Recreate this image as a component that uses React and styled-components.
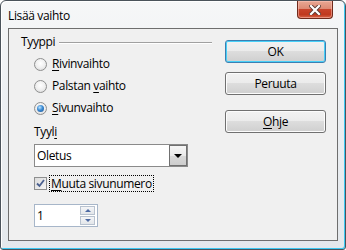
import React from "react";
import styled, { createGlobalStyle } from "styled-components";

const GlobalStyle = createGlobalStyle`
  html, body {
    margin: 0;
    padding: 0;
    background: #ffffff;
  }
  body {
    font-family: "Open Sans", "Liberation Sans", sans-serif;
    font-size: 12px;
    letter-spacing: -0.35px;
    color: #000;
  }
`;

const Window = styled.div`
  width: 346px;
  height: 250px;
  box-sizing: border-box;
  display: flex;
  flex-direction: column;
  padding: 0 7px 8px 7px;
  border: 1px solid #4b535b;
  border-radius: 6px 6px 3px 3px;
  background: linear-gradient(180deg, #f6f7f8 0%, #eceff2 40%, #e4e8ec 100%);
  box-shadow: inset -1px -1px 0 #3cc8f2, inset 1px 1px 0 #ffffff;
`;

const TitleBar = styled.div`
  height: 27px;
  display: flex;
  align-items: flex-start;
  margin: 0 -7px 0 0;
`;

const Title = styled.div`
  padding-top: 7px;
  font-size: 12px;
  line-height: 16px;
`;

const CloseButton = styled.div`
  margin-left: auto;
  margin-right: 12px;
  width: 36px;
  height: 18px;
  box-sizing: border-box;
  border: 1px solid #6f2a1c;
  border-top: none;
  border-radius: 0 0 4px 4px;
  background: linear-gradient(
    180deg,
    #e9a894 0%,
    #dd8a74 45%,
    #c8432b 50%,
    #c0391f 80%,
    #d7664a 100%
  );
  box-shadow: inset 0 0 0 1px rgba(255, 200, 190, 0.5);
  display: flex;
  align-items: center;
  justify-content: center;
`;

const Client = styled.div`
  flex: 1;
  display: flex;
  border: 1px solid #6e6e6e;
  background: #f0f0f0;
`;

const LeftColumn = styled.div`
  width: 191px;
  padding: 5px 0 0 12px;
  display: flex;
  flex-direction: column;
`;

const GroupHeader = styled.div`
  display: flex;
  align-items: center;
  gap: 4px;
  height: 16px;
  line-height: 16px;
  &::after {
    content: "";
    flex: 1;
    height: 1px;
    background: #a0a0a0;
    box-shadow: 0 1px 0 #ffffff;
  }
`;

const Indented = styled.div`
  padding-left: 13px;
  display: flex;
  flex-direction: column;
`;

const RadioList = styled.div`
  margin-top: 3px;
  display: flex;
  flex-direction: column;
`;

const RadioRow = styled.div`
  height: 22px;
  display: flex;
  align-items: center;
  gap: 5px;
`;

const RadioCircle = styled.span`
  width: 13px;
  height: 13px;
  box-sizing: border-box;
  border-radius: 50%;
  border: 1px solid #8e8f8f;
  background: radial-gradient(circle at 50% 40%, #ffffff 0%, #f0f0f0 50%, #d4d4d4 100%);
  display: flex;
  align-items: center;
  justify-content: center;
  &::after {
    content: "";
    display: ${(p) => (p.$checked ? "block" : "none")};
    width: 7px;
    height: 7px;
    border-radius: 50%;
    background: radial-gradient(circle at 40% 35%, #bfe6ff 0%, #3b8bd4 45%, #1b4f8c 100%);
  }
`;

const Label = styled.span`
  line-height: 16px;
`;

const Key = styled.span`
  text-decoration: underline;
  text-underline-offset: 2px;
`;

const FieldLabel = styled.div`
  margin-top: 5px;
  height: 16px;
  line-height: 16px;
`;

const Select = styled.div`
  margin-top: 4px;
  width: 154px;
  height: 23px;
  box-sizing: border-box;
  border: 1px solid #8a8a8a;
  background: #ffffff;
  display: flex;
  align-items: stretch;
  padding: 0 0 0 2px;
`;

const SelectValue = styled.div`
  flex: 1;
  display: flex;
  align-items: center;
`;

const DropButton = styled.div`
  width: 18px;
  box-sizing: border-box;
  border: 1px solid #707070;
  background: linear-gradient(180deg, #f6f6f6 0%, #e9e9e9 50%, #d9d9d9 51%, #cdcdcd 100%);
  display: flex;
  align-items: center;
  justify-content: center;
  &::after {
    content: "";
    border-left: 4px solid transparent;
    border-right: 4px solid transparent;
    border-top: 4px solid #000;
  }
`;

const CheckRow = styled.div`
  margin-top: 8px;
  height: 17px;
  display: flex;
  align-items: center;
  gap: 3px;
`;

const CheckBox = styled.span`
  width: 13px;
  height: 13px;
  box-sizing: border-box;
  border: 1px solid #8e8f8f;
  background: linear-gradient(135deg, #dcdcdc 0%, #f4f4f4 100%);
  display: flex;
  align-items: center;
  justify-content: center;
`;

const FocusLabel = styled.span`
  outline: 1px dotted #000;
  padding: 0 1px;
  line-height: 15px;
`;

const SpinBox = styled.div`
  margin-top: 12px;
  width: 64px;
  height: 23px;
  box-sizing: border-box;
  border: 1px solid #a7b6c9;
  background: #ffffff;
  display: flex;
  align-items: stretch;
  padding: 1px 2px 1px 2px;
`;

const SpinValue = styled.div`
  flex: 1;
  display: flex;
  align-items: center;
`;

const SpinButtons = styled.div`
  width: 15px;
  display: flex;
  flex-direction: column;
  gap: 1px;
`;

const SpinButton = styled.div`
  flex: 1;
  box-sizing: border-box;
  border: 1px solid #b8c2cf;
  background: linear-gradient(180deg, #f4f5f7 0%, #e3e6ea 100%);
  display: flex;
  align-items: center;
  justify-content: center;
  &::after {
    content: "";
    border-left: 3px solid transparent;
    border-right: 3px solid transparent;
    ${(p) =>
      p.$up
        ? "border-bottom: 3px solid #4d6aa3;"
        : "border-top: 3px solid #4d6aa3;"}
  }
`;

const RightColumn = styled.div`
  margin-left: 13px;
  padding-top: 11px;
  display: flex;
  flex-direction: column;
`;

const Button = styled.div`
  width: 101px;
  height: 23px;
  box-sizing: border-box;
  margin-top: ${(p) => p.$gap || 0}px;
  border: 1px solid ${(p) => (p.$default ? "#3c7fb1" : "#707070")};
  border-radius: 3px;
  background: linear-gradient(180deg, #f2f2f2 0%, #ebebeb 49%, #dddddd 50%, #cfcfcf 100%);
  box-shadow: ${(p) =>
    p.$default ? "inset 0 0 0 1px #48d0f8" : "inset 0 0 0 1px #fcfcfc"};
  display: flex;
  align-items: center;
  justify-content: center;
  line-height: 16px;
`;

function App() {
  return (
    <>
      <GlobalStyle />
      <Window>
        <TitleBar>
          <Title>Lisää vaihto</Title>
          <CloseButton>
            <svg width="12" height="10" viewBox="0 0 12 10">
              <path
                d="M2 1 L10 9 M10 1 L2 9"
                stroke="#5b3a34"
                strokeWidth="4"
                strokeLinecap="square"
              />
              <path
                d="M2 1 L10 9 M10 1 L2 9"
                stroke="#ffffff"
                strokeWidth="2.2"
                strokeLinecap="square"
              />
            </svg>
          </CloseButton>
        </TitleBar>
        <Client>
          <LeftColumn>
            <GroupHeader>Tyyppi</GroupHeader>
            <Indented>
              <RadioList>
                <RadioRow>
                  <RadioCircle />
                  <Label>
                    <Key>R</Key>ivinvaihto
                  </Label>
                </RadioRow>
                <RadioRow>
                  <RadioCircle />
                  <Label>
                    Palstan <Key>v</Key>aihto
                  </Label>
                </RadioRow>
                <RadioRow>
                  <RadioCircle $checked />
                  <Label>
                    <Key>S</Key>ivunvaihto
                  </Label>
                </RadioRow>
              </RadioList>
              <FieldLabel>
                Tyyl<Key>i</Key>
              </FieldLabel>
              <Select>
                <SelectValue>Oletus</SelectValue>
                <DropButton />
              </Select>
              <CheckRow>
                <CheckBox>
                  <svg width="9" height="9" viewBox="0 0 9 9">
                    <path
                      d="M1 4.5 L3.5 7 L8 1"
                      fill="none"
                      stroke="#4a6090"
                      strokeWidth="1.8"
                    />
                  </svg>
                </CheckBox>
                <FocusLabel>
                  <Key>M</Key>uuta sivunumero
                </FocusLabel>
              </CheckRow>
              <SpinBox>
                <SpinValue>1</SpinValue>
                <SpinButtons>
                  <SpinButton $up />
                  <SpinButton />
                </SpinButtons>
              </SpinBox>
            </Indented>
          </LeftColumn>
          <RightColumn>
            <Button $default>OK</Button>
            <Button $gap={9}>Peruuta</Button>
            <Button $gap={15}>
              <span>
                <Key>O</Key>hje
              </span>
            </Button>
          </RightColumn>
        </Client>
      </Window>
    </>
  );
}

export default App;
